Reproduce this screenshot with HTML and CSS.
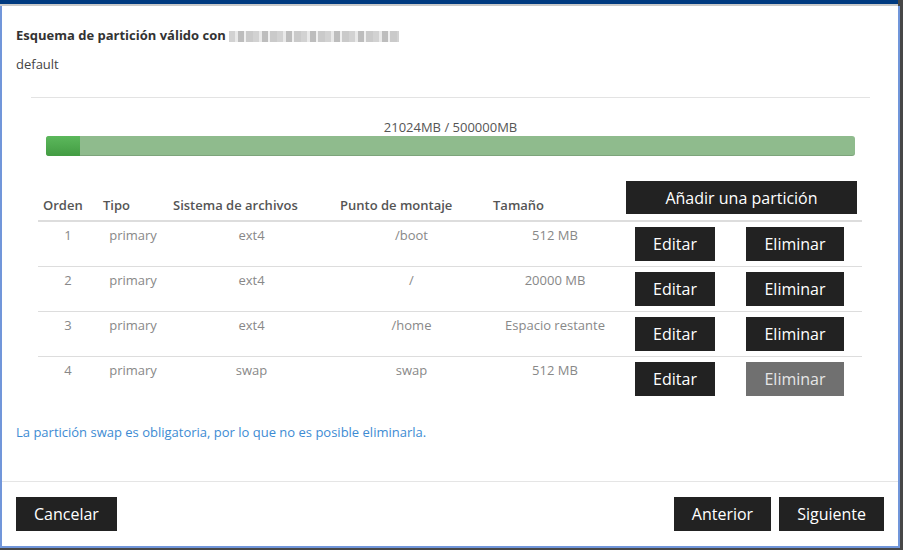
FILE: index.html
```html
<!DOCTYPE html>
<html lang="es">
<head>
    <meta charset="UTF-8">
    <meta name="viewport" content="width=device-width, initial-scale=1.0">
    <title>Esquema de partición</title>
    <link rel="stylesheet" href="styles.css">
</head>
<body>
    <div class="topbar"></div>
    <div class="dialog">
        <div class="dialog-body">
            <div class="title">Esquema de partición válido con <span class="masked"></span></div>
            <div class="scheme">default</div>
            <hr class="sep">

            <div class="usage">
                <div class="usage-label">21024MB / 500000MB</div>
                <div class="bar"><div class="bar-fill" style="width: 4.2%"></div></div>
            </div>

            <table class="parts">
                <colgroup>
                    <col style="width: 60px">
                    <col style="width: 70px">
                    <col style="width: 167px">
                    <col style="width: 153px">
                    <col style="width: 134px">
                    <col style="width: 106px">
                    <col style="width: 134px">
                </colgroup>
                <thead>
                    <tr>
                        <th>Orden</th>
                        <th>Tipo</th>
                        <th>Sistema de archivos</th>
                        <th>Punto de montaje</th>
                        <th>Tamaño</th>
                        <th colspan="2" class="add-cell"><button class="btn btn-add">Añadir una partición</button></th>
                    </tr>
                </thead>
                <tbody>
                    <tr>
                        <td>1</td><td>primary</td><td>ext4</td><td>/boot</td><td>512 MB</td>
                        <td><button class="btn">Editar</button></td>
                        <td><button class="btn">Eliminar</button></td>
                    </tr>
                    <tr>
                        <td>2</td><td>primary</td><td>ext4</td><td>/</td><td>20000 MB</td>
                        <td><button class="btn">Editar</button></td>
                        <td><button class="btn">Eliminar</button></td>
                    </tr>
                    <tr>
                        <td>3</td><td>primary</td><td>ext4</td><td>/home</td><td>Espacio restante</td>
                        <td><button class="btn">Editar</button></td>
                        <td><button class="btn">Eliminar</button></td>
                    </tr>
                    <tr>
                        <td>4</td><td>primary</td><td>swap</td><td>swap</td><td>512 MB</td>
                        <td><button class="btn">Editar</button></td>
                        <td><button class="btn" disabled>Eliminar</button></td>
                    </tr>
                </tbody>
            </table>

            <p class="note">La partición swap es obligatoria, por lo que no es posible eliminarla.</p>
        </div>

        <div class="dialog-footer">
            <button class="btn">Cancelar</button>
            <div class="nav-btns">
                <button class="btn">Anterior</button>
                <button class="btn">Siguiente</button>
            </div>
        </div>
    </div>
</body>
</html>
```

FILE: styles.css
```css
body {
    margin: 0;
    background: #474747;
    font-family: "Open Sans", "DejaVu Sans", sans-serif;
    font-size: 13px;
    line-height: 17px;
    color: #333;
}
.topbar {
    width: 898px;
    height: 4px;
    background: #003a80;
    border-bottom: 2px solid #c9c9c9;
}
.dialog {
    width: 900px;
    box-sizing: border-box;
    background: #fff;
    border: 2px solid #7196da;
    border-top: none;
}
.dialog-body {
    padding: 21px 14px 40px;
}
.title {
    font-weight: 700;
    color: #333;
}
.masked {
    display: inline-block;
    vertical-align: -2px;
    width: 170px;
    height: 11px;
    background: repeating-linear-gradient(90deg, #d2d2d2 0 6px, #e9e9e9 6px 9px, #bdbdbd 9px 15px, #f0f0f0 15px 17px, #cacaca 17px 24px);
}
.scheme {
    margin-top: 12px;
    color: #444;
}
.sep {
    margin: 24px 14px 0 15px;
    border: none;
    border-top: 1px solid #e3e3e3;
}
.usage {
    margin: 21px 29px 0 30px;
}
.usage-label {
    text-align: center;
    color: #555;
}
.bar {
    height: 20px;
    background: #8fbb8d;
    border-radius: 3px;
    overflow: hidden;
    box-shadow: inset 0 -1px 0 rgba(0, 0, 0, 0.12);
}
.bar-fill {
    height: 100%;
    background: linear-gradient(#5cb85c, #439c43);
}
.parts {
    margin: 25px 21px 0 22px;
    width: 824px;
    table-layout: fixed;
    border-collapse: collapse;
}
.parts th {
    text-align: left;
    vertical-align: bottom;
    padding: 0 5px 6px;
    font-weight: 600;
    color: #555;
    border-bottom: 2px solid #dddddd;
}
.parts th.add-cell {
    padding: 0 5px 6px 4px;
}
.parts td {
    text-align: center;
    vertical-align: top;
    padding: 5px 0;
    color: #888;
    border-bottom: 1px solid #dddddd;
}
.parts tbody tr:last-child td {
    border-bottom: none;
}
.btn {
    height: 34px;
    padding: 0 18px;
    background: #222;
    color: #fff;
    border: none;
    border-radius: 0;
    font-family: "Open Sans", "DejaVu Sans", sans-serif;
    font-size: 16px;
    cursor: pointer;
}
.btn:disabled {
    background: #707070;
    color: #e6e6e6;
    cursor: default;
}
.btn-add {
    width: 231px;
    height: 33px;
    display: block;
}
.note {
    margin: 23px 0 0;
    color: #3d8bd3;
}
.dialog-footer {
    display: flex;
    justify-content: space-between;
    padding: 15px 14px 15px 14px;
    border-top: 1px solid #e5e5e5;
}
.nav-btns {
    display: flex;
    gap: 8px;
}
```
